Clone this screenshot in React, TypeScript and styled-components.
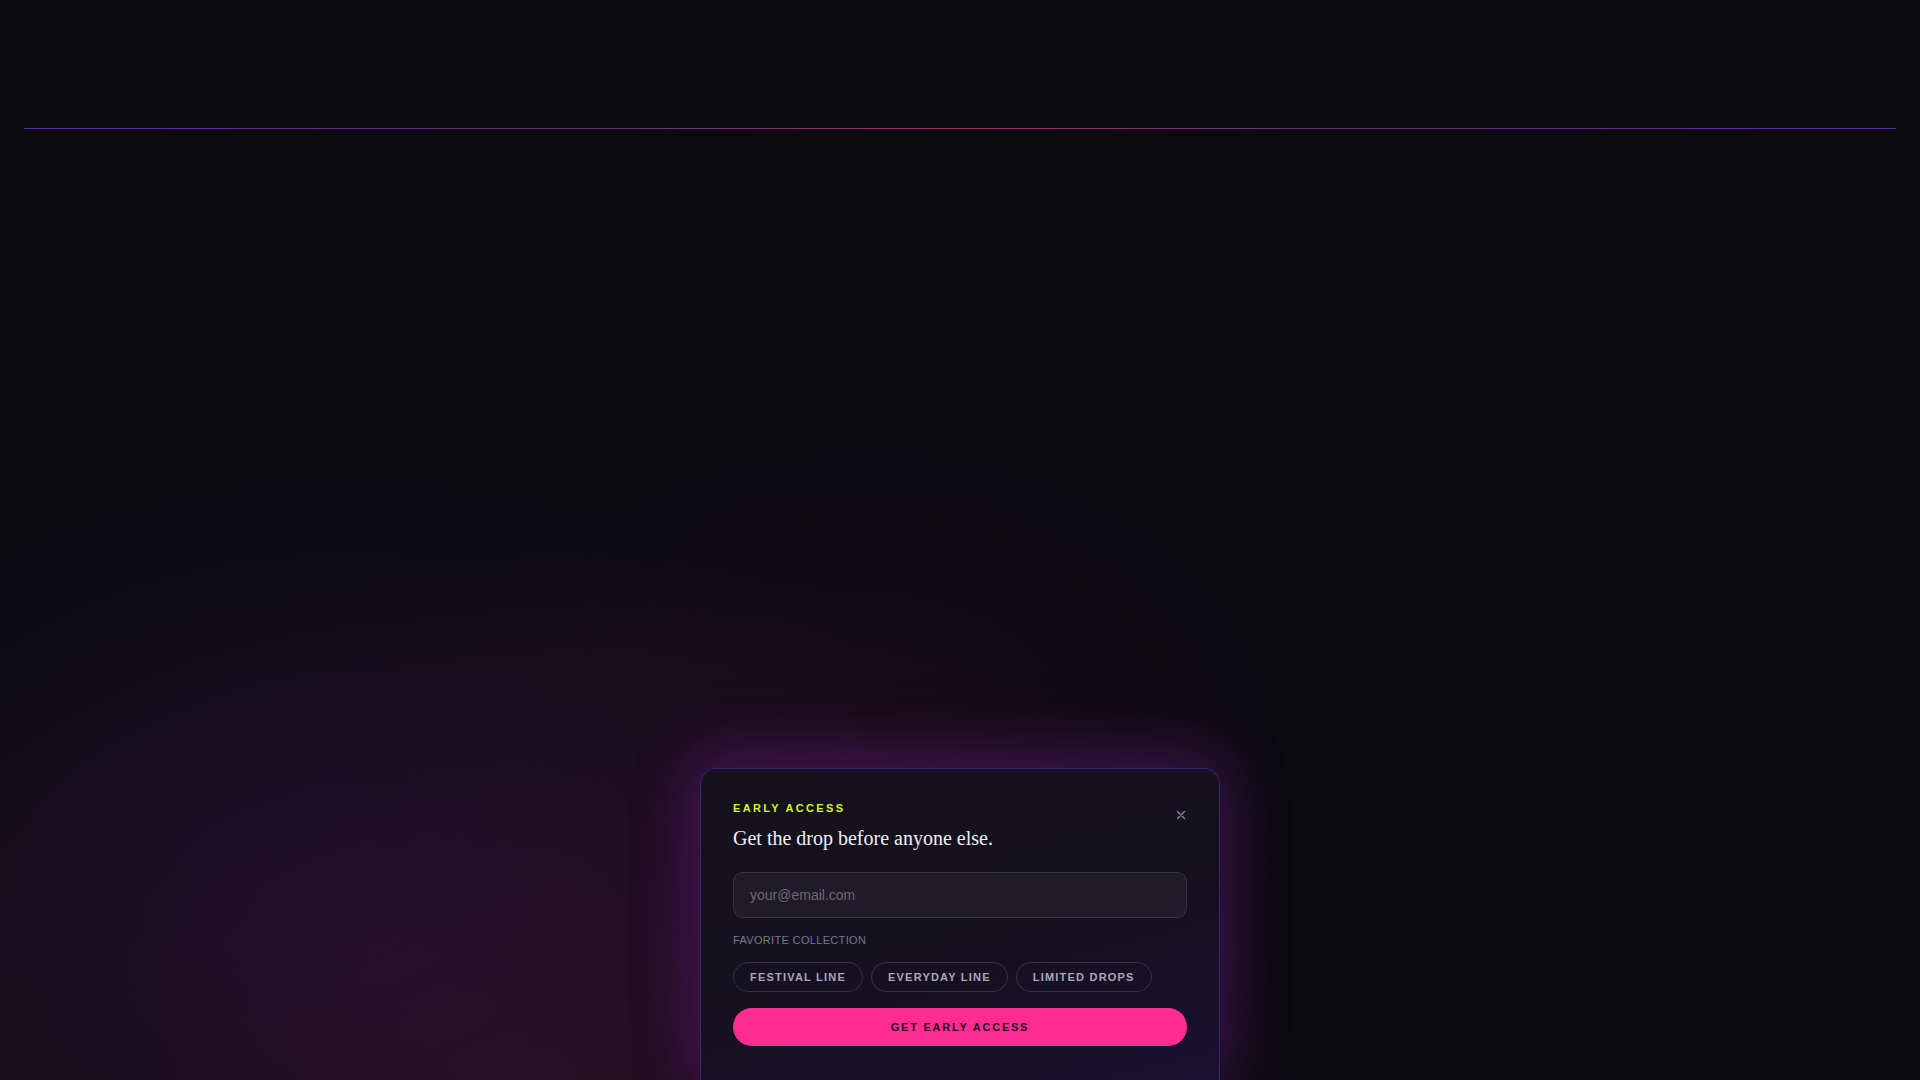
import React, { useState } from "react";
import styled, { createGlobalStyle } from "styled-components";

const GlobalStyle = createGlobalStyle`
  html, body {
    margin: 0;
    padding: 0;
    background: #0b0b10;
  }
  * {
    box-sizing: border-box;
  }
`;

export const Page = styled.div`
  position: relative;
  height: 100vh;
  overflow: hidden;
  display: flex;
  flex-direction: column;
  font-family: "Liberation Sans", Arial, sans-serif;
  background-color: #0b0b10;
  background-image:
    radial-gradient(ellipse 1150px 760px at 28% 102%, rgba(105, 20, 62, 0.26), transparent 72%),
    radial-gradient(ellipse 900px 640px at 18% 84%, rgba(72, 24, 132, 0.2), transparent 70%),
    radial-gradient(ellipse 700px 520px at 45% 70%, rgba(80, 18, 60, 0.14), transparent 70%);
`;

export const Header = styled.header`
  position: relative;
  height: 129px;
  margin: 0 24px;
  flex-shrink: 0;
  &::after {
    content: "";
    position: absolute;
    left: 0;
    right: 0;
    bottom: 0;
    height: 1px;
    background: linear-gradient(
      90deg,
      #5b2fa8 0%,
      #7a2b88 30%,
      #96305f 50%,
      #7a2b88 70%,
      #5b2fa8 100%
    );
  }
`;

export const Main = styled.main`
  flex: 1;
  display: flex;
  align-items: flex-end;
  justify-content: center;
`;

export const Card = styled.section`
  position: relative;
  width: 520px;
  padding: 33px 32px 34px;
  border: 1px solid #36247a;
  border-bottom: none;
  border-radius: 16px 16px 0 0;
  background: linear-gradient(165deg, #15121c 0%, #15111f 55%, #1b1031 100%);
  box-shadow:
    0 0 56px 12px rgba(120, 32, 170, 0.3),
    0 -20px 80px rgba(150, 36, 140, 0.14);
`;

export const Eyebrow = styled.div`
  font-size: 11px;
  font-weight: 700;
  letter-spacing: 0.21em;
  color: #d4f528;
`;

export const Title = styled.h2`
  margin: 12px 0 0;
  font-family: "Liberation Serif", "Times New Roman", serif;
  font-size: 20px;
  font-weight: 400;
  line-height: 24px;
  color: #f1eff6;
`;

export const CloseButton = styled.button`
  position: absolute;
  top: 34px;
  right: 26px;
  width: 24px;
  height: 24px;
  padding: 0;
  border: none;
  background: transparent;
  color: #8c879c;
  cursor: pointer;
  display: flex;
  align-items: center;
  justify-content: center;
`;

export const EmailInput = styled.input`
  display: block;
  width: 100%;
  height: 46px;
  margin-top: 22px;
  padding: 0 16px;
  border: 1px solid #3a3549;
  border-radius: 10px;
  background: rgba(255, 255, 255, 0.045);
  font-family: "Liberation Sans", Arial, sans-serif;
  font-size: 14px;
  color: #ece9f3;
  outline: none;
  &::placeholder {
    color: #6c6779;
  }
`;

export const FieldLabel = styled.div`
  margin-top: 16px;
  font-size: 11px;
  letter-spacing: 0.03em;
  color: #7b768a;
`;

export const ChipRow = styled.div`
  display: flex;
  gap: 8px;
  margin-top: 16px;
`;

export const Chip = styled.button<{ active?: boolean }>`
  height: 30px;
  padding: 0 16px;
  border-radius: 999px;
  border: 1px solid ${({ active }) => (active ? "#ff2d92" : "#37324a")};
  background: ${({ active }) => (active ? "rgba(255, 45, 146, 0.12)" : "transparent")};
  font-family: "Liberation Sans", Arial, sans-serif;
  font-size: 11px;
  font-weight: 700;
  letter-spacing: 0.11em;
  color: ${({ active }) => (active ? "#ff7ab9" : "#aca6bb")};
  cursor: pointer;
`;

export const SubmitButton = styled.button`
  display: block;
  width: 100%;
  height: 38px;
  margin-top: 16px;
  border: none;
  border-radius: 999px;
  background: #ff2d92;
  font-family: "Liberation Sans", Arial, sans-serif;
  font-size: 11px;
  font-weight: 700;
  letter-spacing: 0.16em;
  color: #2a0a1c;
  cursor: pointer;
`;

const collections = ["FESTIVAL LINE", "EVERYDAY LINE", "LIMITED DROPS"];

const App = () => {
  const [picked, setPicked] = useState<string | null>(null);

  return (
    <>
      <GlobalStyle />
      <Page>
        <Header />
        <Main>
          <Card>
            <CloseButton aria-label="Close">
              <svg width="10" height="10" viewBox="0 0 10 10">
                <path
                  d="M1.5 1.5 L8.5 8.5 M8.5 1.5 L1.5 8.5"
                  stroke="currentColor"
                  strokeWidth="1.4"
                  strokeLinecap="round"
                />
              </svg>
            </CloseButton>
            <Eyebrow>EARLY ACCESS</Eyebrow>
            <Title>Get the drop before anyone else.</Title>
            <EmailInput type="email" placeholder="your@email.com" />
            <FieldLabel>FAVORITE COLLECTION</FieldLabel>
            <ChipRow>
              {collections.map((c) => (
                <Chip key={c} active={picked === c} onClick={() => setPicked(c)}>
                  {c}
                </Chip>
              ))}
            </ChipRow>
            <SubmitButton>GET EARLY ACCESS</SubmitButton>
          </Card>
        </Main>
      </Page>
    </>
  );
};

export default App;
